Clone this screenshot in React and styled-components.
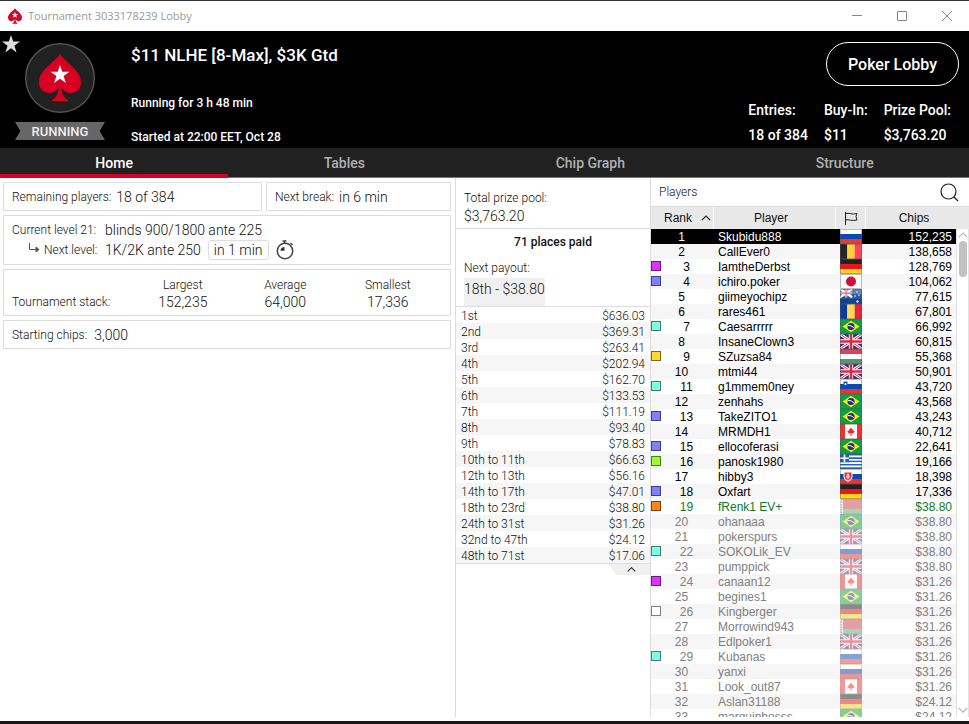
import React from 'react'
import styled, { createGlobalStyle } from 'styled-components'

const GlobalStyle = createGlobalStyle`
  * {
    box-sizing: border-box;
  }
  body {
    margin: 0;
    background: #ffffff;
    color: #111111;
    font-family: Roboto, 'Liberation Sans', sans-serif;
    font-size: 12px;
    font-weight: 300;
  }
  button {
    padding: 0;
    border: 0;
    background: none;
    color: inherit;
    font: inherit;
    cursor: pointer;
  }
  h1, h2, p, dl, dd {
    margin: 0;
    font: inherit;
  }
  svg {
    display: block;
    flex: none;
  }
`

const Window = styled.div`
  display: flex;
  flex-direction: column;
  height: 100vh;
  border-top: 1px solid #333333;
  border-bottom: 3px solid #1c1417;
`

const TitleBar = styled.div`
  display: flex;
  align-items: center;
  flex: none;
  height: 30px;
  padding-left: 8px;
  gap: 6px;
  color: #999999;
  font-family: 'Open Sans', sans-serif;
  font-size: 11px;
  font-weight: 400;
  line-height: 14px;
`

const WindowButtons = styled.div`
  display: flex;
  margin-left: auto;
`

const WindowButton = styled.button`
  display: grid;
  place-items: center;
  width: 45px;
  height: 30px;
`

const Header = styled.header`
  display: flex;
  flex: none;
  height: 117px;
  background: #000000;
  color: #ffffff;
  font-weight: 500;
`

const Badge = styled.div`
  display: flex;
  align-items: flex-start;
  flex: none;
  width: 131px;
  padding: 4px 0 0 2px;
`

const Logo = styled.div`
  display: flex;
  flex-direction: column;
  align-items: center;
  width: 90px;
  margin-left: -5px;
  padding-top: 8px;
  gap: 9px;
`

const Ribbon = styled.div`
  width: 90px;
  height: 18px;
  background: #666666;
  color: #eeeeee;
  clip-path: polygon(0 0, 100% 0, 94% 50%, 100% 100%, 0 100%, 6% 50%);
  font-size: 13px;
  line-height: 19px;
  text-align: center;
`

const Details = styled.div`
  flex: 1;
  padding-top: 13px;
`

const Title = styled.h1`
  margin-bottom: 28px;
  font-size: 17px;
  font-weight: 500;
  line-height: 22px;
`

const Detail = styled.p`
  margin-bottom: 16px;
  line-height: 18px;
`

const Summary = styled.div`
  display: flex;
  flex-direction: column;
  align-items: flex-end;
  padding: 11px 10px 0 0;
`

const LobbyButton = styled.button`
  width: 133px;
  height: 44px;
  border: 1px solid #ffffff;
  border-radius: 22px;
  font-size: 16px;
`

const Stats = styled.dl`
  display: flex;
  padding: 12px 8px 0 0;
  gap: 16px;
  font-size: 14px;
  line-height: 25px;
`

const Tabs = styled.nav`
  display: flex;
  flex: none;
  height: 30px;
  background: #212121;
`

const Tab = styled.a`
  flex: 1 1 auto;
  border-bottom: ${({ $active }) => ($active ? '4px solid #d70022' : '1px solid #777777')};
  color: ${({ $active }) => ($active ? '#ffffff' : '#b0b0b0')};
  font-size: 14px;
  font-weight: 500;
  line-height: 30px;
  text-align: center;
  text-decoration: none;
`

const Content = styled.main`
  display: grid;
  grid-template-columns: minmax(0, 455fr) minmax(0, 195fr) minmax(0, 319fr);
  flex: 1;
  min-height: 0;
  margin-bottom: 4px;
`

const Info = styled.section`
  display: flex;
  flex-direction: column;
  padding: 4px 4px 0 3px;
  gap: 4px;
`

const CardRow = styled.div`
  display: grid;
  grid-template-columns: 259fr 185fr;
  gap: 4px;
`

const Card = styled.div`
  padding: 4px 8px 3px;
  border: 1px solid #dddddd;
`

const LevelCard = styled(Card)`
  padding-bottom: 4px;
`

const Line = styled.div`
  display: flex;
  align-items: center;
  height: 20px;
`

const LineLabel = styled.span`
  display: flex;
  align-items: center;
  min-width: ${({ $wide }) => ($wide ? '93px' : '0')};
  margin-right: ${({ $gap }) => $gap || 0}px;
  padding-left: ${({ $nested }) => ($nested ? '16px' : '0')};
  gap: 4px;
`

const Value = styled.span`
  font-size: 14px;
`

const Pill = styled.span`
  margin: 0 7px;
  padding: 0 5px;
  border: 1px solid #dddddd;
  border-radius: 3px;
  font-size: 14px;
  line-height: 18px;
`

const StackTable = styled.table`
  width: 100%;
  border-collapse: collapse;
  table-layout: fixed;
  line-height: 17px;
  text-align: center;

  th, td {
    padding: 0;
    font-weight: 300;
  }
  tbody th {
    text-align: left;
  }
  td {
    font-size: 14px;
  }
`

const StackCard = styled(Card)`
  padding: 7px 11px 4px 8px;
`

const Prizes = styled.section`
  border-left: 1px solid #dddddd;
`

const PoolBox = styled.div`
  padding: 11px 8px 3px;
  border-bottom: 1px solid #dddddd;
  line-height: 18px;
`

const Places = styled.h2`
  padding-top: 4px;
  font-weight: 500;
  line-height: 18px;
  text-align: center;
`

const NextPayout = styled.div`
  padding: 7px 8px 0;
  border-bottom: 1px solid #dddddd;
  line-height: 20px;
`

const PayoutValue = styled.div`
  width: fit-content;
  height: 28px;
  background: #f0f0f0;
  font-size: 14px;
  line-height: 22px;
`

const PayoutTable = styled.table`
  width: 100%;
  border-bottom: 1px solid #dddddd;
  border-spacing: 0;

  tr:nth-child(even) {
    background: #f6f6f6;
  }
  th, td {
    height: 16px;
    padding: 2px 5px 0;
    font-weight: 300;
    line-height: 14px;
    text-align: left;
  }
  td {
    text-align: right;
  }
`

const Collapse = styled.button`
  display: grid;
  place-items: center;
  width: 42px;
  height: 11px;
  margin-left: auto;
  padding-left: 4px;
  background: #f0f0f0;
  clip-path: polygon(0 0, 100% 0, 100% 100%, 20% 100%);
`

const Players = styled.section`
  display: flex;
  flex-direction: column;
  min-height: 0;
  border-left: 1px solid #dddddd;
`

const PlayersBar = styled.div`
  display: flex;
  align-items: center;
  justify-content: space-between;
  flex: none;
  height: 29px;
  padding: 0 10px 0 8px;
  border-bottom: 1px solid #dddddd;
  line-height: 16px;
`

const PlayersList = styled.div`
  position: relative;
  flex: 1;
  min-height: 0;
  overflow: hidden;
`

const PlayersTable = styled.table`
  width: 100%;
  border-spacing: 0;
  table-layout: fixed;
  font-family: 'Liberation Sans', Arial, sans-serif;
  font-weight: 400;
`

const HeadCell = styled.th`
  width: ${({ $width }) => $width || 'auto'};
  height: 22px;
  padding: 0 ${({ $right }) => $right || 0}px 0 0;
  border-right: ${({ $last }) => ($last ? '0' : '1px solid #ffffff')};
  background: #e8e8e8;
  font-weight: 400;

  > svg {
    margin: 0 auto;
  }
`

const SortButton = styled.button`
  display: flex;
  align-items: center;
  margin-left: 13px;
  gap: 9px;
`

const PlayerRow = styled.tr`
  background: ${({ $selected }) => ($selected ? '#000000' : '#ffffff')};
  color: ${({ $selected, $state }) =>
    $selected ? '#ffffff' : { out: '#808080', won: '#0c7a2c' }[$state] || '#000000'};

  &:nth-child(even) {
    background: #f6f6f6;
  }
  td {
    height: 15px;
    padding: 1px 0 0;
    line-height: 14px;
  }
  td:nth-child(2) {
    padding-left: 4px;
  }
  td:nth-child(odd) {
    padding-top: 0;
  }
  td:nth-child(3) svg {
    margin-left: 4px;
    opacity: ${({ $state }) => ($state ? 0.5 : 1)};
  }
  td:last-child {
    padding-right: 17px;
    text-align: right;
  }
`

const Rank = styled.div`
  display: flex;
  align-items: flex-start;
  padding-right: 2px;

  span {
    flex: 1;
    padding-top: 1px;
    text-align: center;
  }
`

const Note = styled.i`
  width: 10px;
  height: 10px;
  margin-top: 2px;
  border: 1px solid rgba(0, 0, 0, 0.5);
  background: ${({ $color }) => $color};
`

const ScrollBar = styled.div`
  position: absolute;
  top: 22px;
  right: 0;
  bottom: 0;
  display: flex;
  flex-direction: column;
  align-items: center;
  width: 13px;
  padding: 1px 0 2px;
  background: #ffffff;
  border: solid #e2e2e2;
  border-width: 0 1px;
`

const Thumb = styled.div`
  width: 8px;
  height: 36px;
  margin-top: 1px;
  margin-bottom: auto;
  border-radius: 4px;
  background: #c2c2c2;
`

const Star = ({ size, fill }) => (
  <svg width={size} height={size} viewBox="0 0 20 20">
    <path d="M10 0l2.4 7.3H20l-6.2 4.6 2.4 7.5L10 14.8l-6.2 4.6 2.4-7.5L0 7.3h7.6z" fill={fill} />
  </svg>
)

const Spade = () => (
  <>
    <path
      d="M35 11C31 18 14 27 14 39c0 7 5 11 10 11 4 0 8-2 9.500-5.500C33.500 51 31 55 26 58h18c-5-3-7.500-7-7.500-13.500C38 48 42 50 46 50c5 0 10-4 10-11 0-12-17-21-21-28z"
      fill="#d70022"
    />
    <path d="M35 22l2.200 6.800h7.300l-5.900 4.200 2.300 7-5.900-4.300-5.900 4.300 2.300-7-5.900-4.200h7.300z" fill="#ffffff" />
  </>
)

const Chevron = ({ width, down, color = '#222222' }) => (
  <svg width={width} height={width} viewBox="0 0 10 10" fill="none" stroke={color} strokeWidth="1.200">
    <path d={down ? 'M.8 3L5 7.200 9.200 3' : 'M.8 7.200L5 3l4.200 4.200'} />
  </svg>
)

const bars = (colors, vertical) =>
  colors.map((color, i) => {
    const part = (vertical ? 22 : 15) / colors.length
    return vertical ? (
      <rect key={i} x={i * part} width={part} height="15" fill={color} />
    ) : (
      <rect key={i} y={i * part} width="22" height={part} fill={color} />
    )
  })

const UnionJack = () => (
  <>
    <path d="M0 0h22v15H0z" fill="#25308a" />
    <path d="M0 0l22 15M22 0L0 15" stroke="#ffffff" strokeWidth="3" />
    <path d="M0 0l22 15M22 0L0 15" stroke="#e0283c" strokeWidth="1" />
    <path d="M11 0v15M0 7.500h22" stroke="#ffffff" strokeWidth="4.400" />
    <path d="M11 0v15M0 7.500h22" stroke="#e0283c" strokeWidth="2.600" />
  </>
)

const flags = {
  ru: bars(['#ffffff', '#0c47b7', '#e53b35']),
  be: bars(['#262626', '#ffd03b', '#ff4455'], true),
  de: bars(['#222222', '#ee1515', '#ffd520']),
  ro: bars(['#0b3d9c', '#ffd955', '#e5243b'], true),
  hu: bars(['#e0404f', '#ffffff', '#5c9468']),
  jp: (
    <>
      {bars(['#ffffff'])}
      <circle cx="11" cy="7.500" r="5" fill="#d0103a" />
    </>
  ),
  nz: (
    <>
      {bars(['#5a82bd', '#2b5aa4', '#16408d'])}
      <g transform="scale(.55)">
        <path d="M0 0l22 15M22 0L0 15M11 0v15M0 7.500h22" stroke="#ffffff" strokeWidth="4" />
        <path d="M11 0v15M0 7.500h22" stroke="#e06070" strokeWidth="2" />
      </g>
      <path d="M17 2v2M15 6v2M19 5v2M17.500 11v3M16 12.500h3" stroke="#f0c8d4" strokeWidth="1.200" />
    </>
  ),
  br: (
    <>
      {bars(['#0ba043'])}
      <path d="M11 1.800l8.500 5.700-8.500 5.700-8.500-5.700z" fill="#ffe01f" />
      <circle cx="11" cy="7.500" r="3.500" fill="#18317c" />
      <path d="M7.800 6.500q3.500-.5 6.200 2.300" fill="none" stroke="#ffffff" />
    </>
  ),
  gb: <UnionJack />,
  si: (
    <>
      {bars(['#ffffff', '#0c47b7', '#e8332e'])}
      <path d="M3.500 2.500h4V6q-.5 1.500-2 2-1.500-.5-2-2z" fill="#1656c4" />
      <path d="M5.500 4v2M4.500 5.200h2" stroke="#ffffff" />
    </>
  ),
  ca: (
    <>
      {bars(['#f03030'])}
      <path d="M5 0h12v15H5z" fill="#ffffff" />
      <path d="M11 3.500l1.300 2 1-.3-.2 1.600 1.700.2-1.300 2.200-2 .3V12h-1V9.500l-2-.3L7.200 7l1.700-.2-.2-1.600 1 .3z" fill="#f02828" />
    </>
  ),
  gr: (
    <>
      {bars(['#1c63bd', '#ffffff', '#1c63bd', '#ffffff', '#1c63bd', '#ffffff', '#1c63bd', '#ffffff', '#1c63bd'])}
      <path d="M0 0h9v8.300H0z" fill="#1c63bd" />
      <path d="M4.500 0v8.300M0 4.200h9" stroke="#ffffff" strokeWidth="1.600" />
    </>
  ),
  sk: (
    <>
      {bars(['#ffffff', '#0c47b7', '#e8332e'])}
      <path d="M3.500 2.500h9V8q-.7 3.500-4.500 4.800Q4.200 11.500 3.500 8z" fill="#ffffff" />
      <path d="M4.500 3.500h7V8q-.7 2.800-3.500 3.800Q5.200 10.800 4.500 8z" fill="#e8283a" />
      <path d="M8 4.500v6M6.500 6h3M6 8h4" stroke="#ffffff" />
    </>
  ),
  by: (
    <>
      <path d="M0 0h22v10H0z" fill="#c8404f" />
      <path d="M0 10h22v5H0z" fill="#55ad65" />
      <path d="M0 0h3v15H0z" fill="#ffffff" />
      <path d="M1.500 0v15" stroke="#c8404f" strokeWidth="1.600" strokeDasharray="1.500 1" />
    </>
  ),
}

const Flag = ({ code }) => (
  <svg width="22" height="15" viewBox="0 0 22 15" role="img" aria-label={code}>
    {flags[code]}
    <path d="M.5.5h21v14H.5z" fill="none" stroke="#555555" strokeOpacity=".4" />
  </svg>
)

const teal = '#7fffe0'
const blue = '#8080ff'
const pink = '#dd33ff'

const players = [
  ['Skubidu888', 'ru', '152,235'],
  ['CallEver0', 'be', '138,658'],
  ['IamtheDerbst', 'de', '128,769', pink],
  ['ichiro.poker', 'jp', '104,062', blue],
  ['giimeyochipz', 'nz', '77,615'],
  ['rares461', 'ro', '67,801'],
  ['Caesarrrrr', 'br', '66,992', teal],
  ['InsaneClown3', 'gb', '60,815'],
  ['SZuzsa84', 'hu', '55,368', '#ffd92e'],
  ['mtmi44', 'gb', '50,901'],
  ['g1mmem0ney', 'si', '43,720', teal],
  ['zenhahs', 'br', '43,568'],
  ['TakeZITO1', 'br', '43,243', blue],
  ['MRMDH1', 'ca', '40,712'],
  ['ellocoferasi', 'br', '22,641', blue],
  ['panosk1980', 'gr', '19,166', '#99ff33'],
  ['hibby3', 'sk', '18,398'],
  ['Oxfart', 'de', '17,336', blue],
  ['fRenk1 EV+', 'by', '$38.80', '#ff8519'],
  ['ohanaaa', 'br', '$38.80'],
  ['pokerspurs', 'gb', '$38.80'],
  ['SOKOLik_EV', 'ru', '$38.80', teal],
  ['pumppick', 'gb', '$38.80'],
  ['canaan12', 'ca', '$31.26', pink],
  ['begines1', 'br', '$31.26'],
  ['Kingberger', 'de', '$31.26', '#ffffff'],
  ['Morrowind943', 'by', '$31.26'],
  ['Edlpoker1', 'gb', '$31.26'],
  ['Kubanas', 'ru', '$31.26', teal],
  ['yanxi', 'ru', '$31.26'],
  ['Look_out87', 'ca', '$31.26'],
  ['Aslan31188', 'de', '$24.12'],
  ['marquinhosss', 'br', '$24.12'],
]

const payouts = [
  ['1st', '$636.03'],
  ['2nd', '$369.31'],
  ['3rd', '$263.41'],
  ['4th', '$202.94'],
  ['5th', '$162.70'],
  ['6th', '$133.53'],
  ['7th', '$111.19'],
  ['8th', '$93.40'],
  ['9th', '$78.83'],
  ['10th to 11th', '$66.63'],
  ['12th to 13th', '$56.16'],
  ['14th to 17th', '$47.01'],
  ['18th to 23rd', '$38.80'],
  ['24th to 31st', '$31.26'],
  ['32nd to 47th', '$24.12'],
  ['48th to 71st', '$17.06'],
]

const playerState = (rank) => {
  if (rank === 19) return 'won'
  return rank > 19 ? 'out' : undefined
}

const TopBar = () => (
  <TitleBar>
    <svg width="14" height="16" viewBox="14 11 42 47">
      <Spade />
    </svg>
    <span>Tournament 3033178239 Lobby</span>
    <WindowButtons>
      <WindowButton aria-label="Minimize">
        <svg width="10" height="10" stroke="#888888"><path d="M0 4.500h10" /></svg>
      </WindowButton>
      <WindowButton aria-label="Maximize">
        <svg width="10" height="10" fill="none" stroke="#888888"><path d="M.5.500h9v9h-9z" /></svg>
      </WindowButton>
      <WindowButton aria-label="Close">
        <svg width="10" height="10" stroke="#888888"><path d="M0 0l10 10M10 0L0 10" /></svg>
      </WindowButton>
    </WindowButtons>
  </TitleBar>
)

const LobbyHeader = () => (
  <Header>
    <Badge>
      <button aria-label="Favourite"><Star size={18} fill="#dddddd" /></button>
      <Logo>
        <svg width="70" height="70" viewBox="0 0 70 70">
          <circle cx="35" cy="35" r="34.300" fill="#212121" stroke="#555555" strokeWidth="1.400" />
          <Spade />
        </svg>
        <Ribbon>RUNNING</Ribbon>
      </Logo>
    </Badge>
    <Details>
      <Title>$11 NLHE [8-Max], $3K Gtd</Title>
      <Detail>Running for 3 h 48 min</Detail>
      <Detail>Started at 22:00 EET, Oct 28</Detail>
    </Details>
    <Summary>
      <LobbyButton>Poker Lobby</LobbyButton>
      <Stats>
        <div><dt>Entries:</dt><dd>18 of 384</dd></div>
        <div><dt>Buy-In:</dt><dd>$11</dd></div>
        <div><dt>Prize Pool:</dt><dd>$3,763.20</dd></div>
      </Stats>
    </Summary>
  </Header>
)

const InfoSection = () => (
  <Info>
    <CardRow>
      <Card>
        <Line><LineLabel $gap={5}>Remaining players:</LineLabel><Value>18 of 384</Value></Line>
      </Card>
      <Card>
        <Line><LineLabel $gap={5}>Next break:</LineLabel><Value>in 6 min</Value></Line>
      </Card>
    </CardRow>
    <LevelCard>
      <Line>
        <LineLabel $wide>Current level 21:</LineLabel>
        <Value>blinds 900/1800 ante 225</Value>
      </Line>
      <Line>
        <LineLabel $wide $nested>
          <svg width="12" height="14" fill="none" stroke="#555555">
            <path d="M1.500 0v6.500H10" />
            <path d="M8 4l3 2.500L8 9z" fill="#555555" />
          </svg>
          Next level:
        </LineLabel>
        <Value>1K/2K ante 250</Value>
        <Pill>in 1 min</Pill>
        <svg width="18" height="20" viewBox="0 0 18 20" fill="none" stroke="#444444" strokeWidth="1.500">
          <circle cx="9" cy="11" r="7.700" />
          <path d="M6.500 1h4M8.500 1v2.500M14.500 3l2 2" />
          <path d="M8.500 10.800V7a4 4 0 00-4 3.800z" fill="#333333" stroke="none" />
        </svg>
      </Line>
    </LevelCard>
    <StackCard>
      <StackTable>
        <colgroup>
          <col width="28%" />
          <col width="24%" />
          <col width="24%" />
          <col width="24%" />
        </colgroup>
        <thead>
          <tr><td /><th>Largest</th><th>Average</th><th>Smallest</th></tr>
        </thead>
        <tbody>
          <tr><th>Tournament stack:</th><td>152,235</td><td>64,000</td><td>17,336</td></tr>
        </tbody>
      </StackTable>
    </StackCard>
    <Card>
      <Line><LineLabel $gap={7}>Starting chips:</LineLabel><Value>3,000</Value></Line>
    </Card>
  </Info>
)

const PrizeSection = () => (
  <Prizes>
    <PoolBox>
      <p>Total prize pool:</p>
      <Value as="p">$3,763.20</Value>
    </PoolBox>
    <Places>71 places paid</Places>
    <NextPayout>
      <p>Next payout:</p>
      <PayoutValue>18th - $38.80</PayoutValue>
    </NextPayout>
    <PayoutTable>
      <tbody>
        {payouts.map(([place, prize]) => (
          <tr key={place}><th scope="row">{place}</th><td>{prize}</td></tr>
        ))}
      </tbody>
    </PayoutTable>
    <Collapse aria-label="Collapse payouts"><Chevron width={9} /></Collapse>
  </Prizes>
)

const PlayersSection = () => (
  <Players>
    <PlayersBar>
      <h2>Players</h2>
      <button aria-label="Search players">
        <svg width="19" height="19" fill="none" stroke="#222222" strokeWidth="1.200">
          <circle cx="8.500" cy="8.500" r="7.500" />
          <path d="M14 14l4 4" />
        </svg>
      </button>
    </PlayersBar>
    <PlayersList>
      <PlayersTable>
        <thead>
          <tr>
            <HeadCell $width="63px"><SortButton>Rank <Chevron width={10} /></SortButton></HeadCell>
            <HeadCell $right={7}>Player</HeadCell>
            <HeadCell $width="30px">
              <svg width="14" height="13" fill="none" stroke="#222222">
                <path d="M1.500 0v13M1.500 1.500C5 .5 8 3 13 1.500L12 4.500l1 3.500C8 9.500 5 7 1.500 8" />
              </svg>
            </HeadCell>
            <HeadCell $width="103px" $right={7} $last>Chips</HeadCell>
          </tr>
        </thead>
        <tbody>
          {players.map(([name, flag, chips, note], i) => (
            <PlayerRow key={name} $selected={i === 0} $state={playerState(i + 1)}>
              <td><Rank>{note && <Note $color={note} />}<span>{i + 1}</span></Rank></td>
              <td>{name}</td>
              <td><Flag code={flag} /></td>
              <td>{chips}</td>
            </PlayerRow>
          ))}
        </tbody>
      </PlayersTable>
      <ScrollBar>
        <Chevron width={10} color="#b5b5b5" />
        <Thumb />
        <Chevron width={10} color="#b5b5b5" down />
      </ScrollBar>
    </PlayersList>
  </Players>
)

const App = () => (
  <>
    <GlobalStyle />
    <Window>
      <TopBar />
      <LobbyHeader />
      <Tabs>
        <Tab href="#home" $active>Home</Tab>
        <Tab href="#tables">Tables</Tab>
        <Tab href="#chip-graph">Chip Graph</Tab>
        <Tab href="#structure">Structure</Tab>
      </Tabs>
      <Content>
        <InfoSection />
        <PrizeSection />
        <PlayersSection />
      </Content>
    </Window>
  </>
)

export default App
